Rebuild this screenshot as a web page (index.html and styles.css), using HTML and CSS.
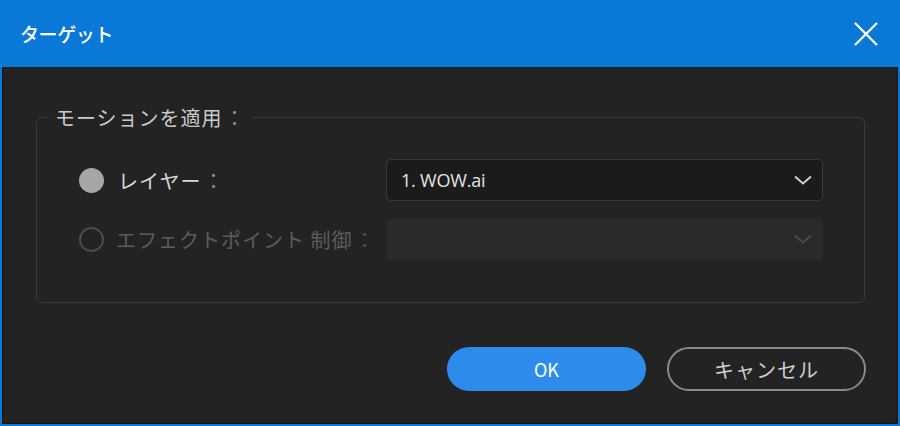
FILE: index.html
```html
<!DOCTYPE html>
<html lang="ja">
<head>
<meta charset="utf-8">
<title>ターゲット</title>
<link rel="stylesheet" href="styles.css">
</head>
<body>
<div class="window">
  <div class="titlebar">
    <span class="title">ターゲット</span>
    <svg class="close" width="24" height="24" viewBox="0 0 24 24"><path d="M1 1 L23 23 M23 1 L1 23" stroke="#fff" stroke-width="2.2" fill="none"/></svg>
  </div>
  <div class="content">
    <fieldset class="group">
      <legend class="legend">モーションを適用<span class="colon">：</span></legend>
      <div class="row">
        <span class="radio checked"></span>
        <span class="label">レイヤー<span class="colon">：</span></span>
        <div class="select">
          <span class="value">1. WOW.ai</span>
          <svg class="chev" width="20" height="10" viewBox="0 0 20 10"><path d="M2 1.5 L10 8.5 L18 1.5" stroke="#d0d0d0" stroke-width="2" fill="none"/></svg>
        </div>
      </div>
      <div class="row">
        <span class="radio disabled"></span>
        <span class="label dim">エフェクトポイント 制御<span class="colon dimc">：</span></span>
        <div class="select off">
          <span class="value"></span>
          <svg class="chev" width="20" height="10" viewBox="0 0 20 10"><path d="M2 1.5 L10 8.5 L18 1.5" stroke="#4a4a4a" stroke-width="2" fill="none"/></svg>
        </div>
      </div>
    </fieldset>
    <div class="buttons">
      <button class="btn ok">OK</button>
      <button class="btn cancel">キャンセル</button>
    </div>
  </div>
</div>
</body>
</html>
```

FILE: styles.css
```css
* { box-sizing: border-box; }
html, body { margin: 0; padding: 0; }
body {
  width: 900px;
  height: 426px;
  background: #232323;
  font-family: "Noto Sans CJK JP", "Noto Sans", sans-serif;
  overflow: hidden;
}
.window {
  width: 900px;
  height: 426px;
  display: flex;
  flex-direction: column;
  background: #0a78d7;
}
.titlebar {
  height: 67px;
  flex: none;
  background: #0a78d7;
  display: flex;
  align-items: center;
  justify-content: space-between;
  padding: 0 22px 0 20px;
}
.title {
  color: #fff;
  font-size: 19px;
  font-weight: 500;
  letter-spacing: -0.4px;
}
.content {
  flex: 1;
  margin: 0 2px 2px 2px;
  background: #232323;
  border: 1px solid #1a1208;
  border-top: none;
  display: flex;
  flex-direction: column;
  padding: 36px 31px 0 33px;
}
.group {
  margin: 0 1px 0 0;
  border: 1px solid #3a3a3a;
  border-radius: 6px;
  padding: 27px 41px 36px 42px;
  height: 200px;
  display: flex;
  flex-direction: column;
  gap: 17px;
  min-width: 0;
}
.legend {
  margin-left: -30px;
  padding: 0 6px;
  color: #cacaca;
  font-size: 20px;
  letter-spacing: 1px;
}
.colon { color: #7a8fa8; margin-left: 2px; }
.dimc { color: #4a4f58; }
.row {
  display: flex;
  align-items: center;
  height: 42px;
}
.radio {
  width: 25px;
  height: 25px;
  border-radius: 50%;
  flex: none;
}
.radio.checked { background: #a6a6a6; }
.radio.disabled { border: 2px solid #4c4c4c; }
.label {
  margin-left: 14px;
  color: #d6d6d6;
  font-size: 20px;
  letter-spacing: 1px;
  white-space: nowrap;
}
.label.dim { color: #5c5c5c; margin-left: 12px; }
.select {
  width: 437px;
  height: 42px;
  flex: none;
  border-radius: 5px;
  background: #1b1b1b;
  border: 1px solid #3a3a3a;
  display: flex;
  align-items: center;
  justify-content: space-between;
  padding: 0 9px 0 14px;
  margin-left: auto;
}
.select.off {
  background: #2a2a2a;
  border-color: #2a2a2a;
}
.value {
  color: #e4e4e4;
  font-family: "Open Sans", "Noto Sans", sans-serif;
  font-size: 18px;
  letter-spacing: -0.2px;
}
.buttons {
  display: flex;
  justify-content: flex-end;
  gap: 21px;
  margin-top: 44px;
}
.btn {
  width: 199px;
  height: 44px;
  border-radius: 22px;
  font-family: "Noto Sans CJK JP", "Noto Sans", sans-serif;
  font-size: 18px;
  padding: 0;
}
.ok {
  background: #2d8ceb;
  border: none;
  color: #fff;
}
.cancel {
  background: transparent;
  border: 2px solid #8a8a8a;
  color: #cfcfcf;
  font-size: 20px;
  letter-spacing: 1px;
}
```
